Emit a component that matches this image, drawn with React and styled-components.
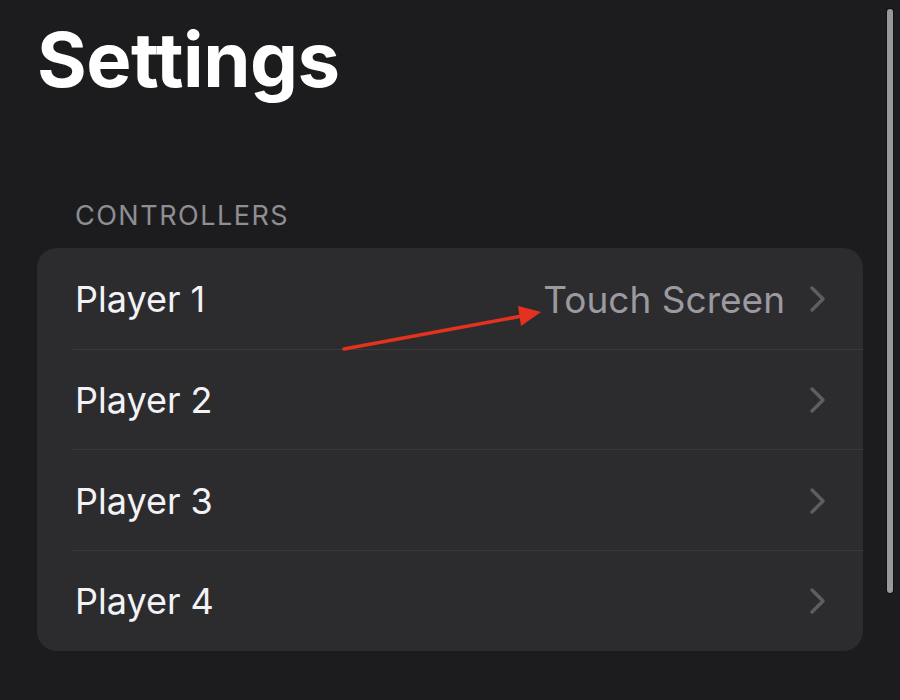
import React from 'react';
import styled, { createGlobalStyle } from 'styled-components';

const GlobalStyle = createGlobalStyle`
  html, body {
    margin: 0;
    padding: 0;
    background: #1c1c1e;
  }
  body {
    font-family: Inter, "Noto Sans", "Liberation Sans", sans-serif;
    -webkit-font-smoothing: antialiased;
  }
`;

const Page = styled.div`
  position: relative;
  width: 900px;
  height: 700px;
  overflow: hidden;
  box-sizing: border-box;
  padding: 13px 37px 0 37px;
`;

const Title = styled.h1`
  margin: 0;
  font-size: 76px;
  font-weight: 700;
  letter-spacing: -0.5px;
  line-height: 92px;
  color: #ffffff;
`;

const SectionHeader = styled.div`
  margin: 95px 0 0 38px;
  font-size: 27px;
  font-weight: 400;
  letter-spacing: 1.5px;
  color: #8e8e93;
  line-height: 32px;
`;

const Card = styled.div`
  margin-top: 16px;
  width: 826px;
  background: #2c2c2e;
  border-radius: 20px;
  overflow: hidden;
`;

const Row = styled.div`
  display: flex;
  align-items: center;
  box-sizing: border-box;
  height: 100.7px;
  padding: 2px 36px 0 38px;
  position: relative;

  & + &::before {
    content: '';
    position: absolute;
    top: 0;
    left: 36px;
    right: 0;
    height: 1px;
    background: #3a3a3d;
  }
`;

const Label = styled.span`
  flex: 1;
  font-size: 36px;
  color: #f2f2f7;
`;

const Value = styled.span`
  font-size: 37px;
  color: #9a9aa0;
  margin-right: 24px;
`;

const Chevron = () => (
  <svg width="18" height="28" viewBox="0 0 18 28">
    <path
      d="M3 3 L14 14 L3 25"
      fill="none"
      stroke="#5e5e62"
      strokeWidth="3.4"
      strokeLinecap="round"
      strokeLinejoin="round"
    />
  </svg>
);

const Scrollbar = styled.div`
  position: absolute;
  top: 9px;
  right: 7px;
  width: 6px;
  height: 584px;
  border-radius: 3px;
  background: #98989d;
  box-shadow: 0 0 0 1px #111113;
`;

const Arrow = styled.svg`
  position: absolute;
  left: 0;
  top: 0;
  pointer-events: none;
`;

const players = [
  { name: 'Player 1', value: 'Touch Screen' },
  { name: 'Player 2' },
  { name: 'Player 3' },
  { name: 'Player 4' }
];

export default function App() {
  return (
    <>
      <GlobalStyle />
      <Page>
        <Title>Settings</Title>
        <SectionHeader>CONTROLLERS</SectionHeader>
        <Card>
          {players.map(p => (
            <Row key={p.name}>
              <Label>{p.name}</Label>
              {p.value && <Value>{p.value}</Value>}
              <Chevron />
            </Row>
          ))}
        </Card>
        <Scrollbar />
        <Arrow width="900" height="700" viewBox="0 0 900 700">
          <line
            x1="344"
            y1="349"
            x2="522"
            y2="316"
            stroke="#e5321e"
            strokeWidth="3.5"
            strokeLinecap="round"
          />
          <path d="M541 312 L518 306 L521 326 Z" fill="#e5321e" />
        </Arrow>
      </Page>
    </>
  );
}
